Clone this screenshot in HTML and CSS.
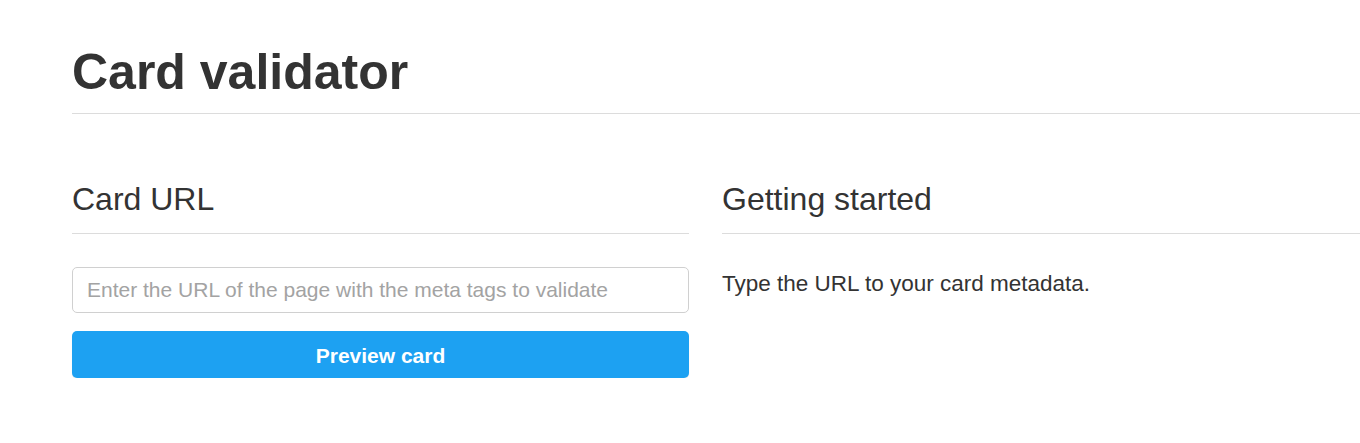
FILE: index.html
```html
<!DOCTYPE html>
<html lang="en">
<head>
    <meta charset="UTF-8">
    <meta name="viewport" content="width=device-width, initial-scale=1.0">
    <title>Card validator</title>
    <link rel="stylesheet" href="styles.css">
</head>
<body>
    <div class="page">
        <h1>Card validator</h1>

        <div class="columns">
            <div class="column">
                <h2>Card URL</h2>
                <form class="card-form" onsubmit="return false;">
                    <input type="text" class="url-input" placeholder="Enter the URL of the page with the meta tags to validate">
                    <button type="submit" class="preview-btn">Preview card</button>
                </form>
            </div>

            <div class="column">
                <h2>Getting started</h2>
                <p class="hint">Type the URL to your card metadata.</p>
            </div>
        </div>
    </div>
</body>
</html>
```

FILE: styles.css
```css
html, body {
    margin: 0;
    padding: 0;
    background-color: #fff;
}
body {
    font-family: "Liberation Sans", Arial, Helvetica, sans-serif;
    color: #333;
    overflow: hidden;
}
.page {
    padding: 42px 0 0 72px;
}
h1 {
    margin: 0;
    font-size: 50px;
    line-height: 60px;
    font-weight: bold;
    color: #333;
    padding-bottom: 11px;
    border-bottom: 1px solid #dcdcdc;
}
.columns {
    display: grid;
    grid-template-columns: 617px 1fr;
    column-gap: 33px;
    margin-top: 65px;
}
h2 {
    margin: 0;
    font-size: 32px;
    line-height: 40px;
    font-weight: normal;
    color: #333;
    padding-bottom: 14px;
    border-bottom: 1px solid #dcdcdc;
}
.card-form {
    margin-top: 33px;
    display: flex;
    flex-direction: column;
    gap: 18px;
}
.url-input {
    box-sizing: border-box;
    width: 100%;
    height: 46px;
    padding: 0 14px;
    border: 1px solid #d0d0d0;
    border-radius: 5px;
    font-family: inherit;
    font-size: 21px;
    color: #333;
}
.url-input::placeholder {
    color: #a3a3a3;
}
.url-input:focus {
    outline: none;
    border-color: #1da1f2;
}
.preview-btn {
    height: 47px;
    width: 100%;
    padding: 2px 0 0;
    border: none;
    border-radius: 5px;
    background-color: #1da1f2;
    box-shadow: 0 1px 1px rgba(0, 0, 0, 0.08);
    color: #fff;
    font-family: inherit;
    font-size: 21px;
    font-weight: bold;
    cursor: pointer;
}
.preview-btn:hover {
    background-color: #1a91da;
}
.hint {
    margin: 35px 0 0;
    font-size: 22.5px;
    line-height: 30px;
    color: #333;
}
```
